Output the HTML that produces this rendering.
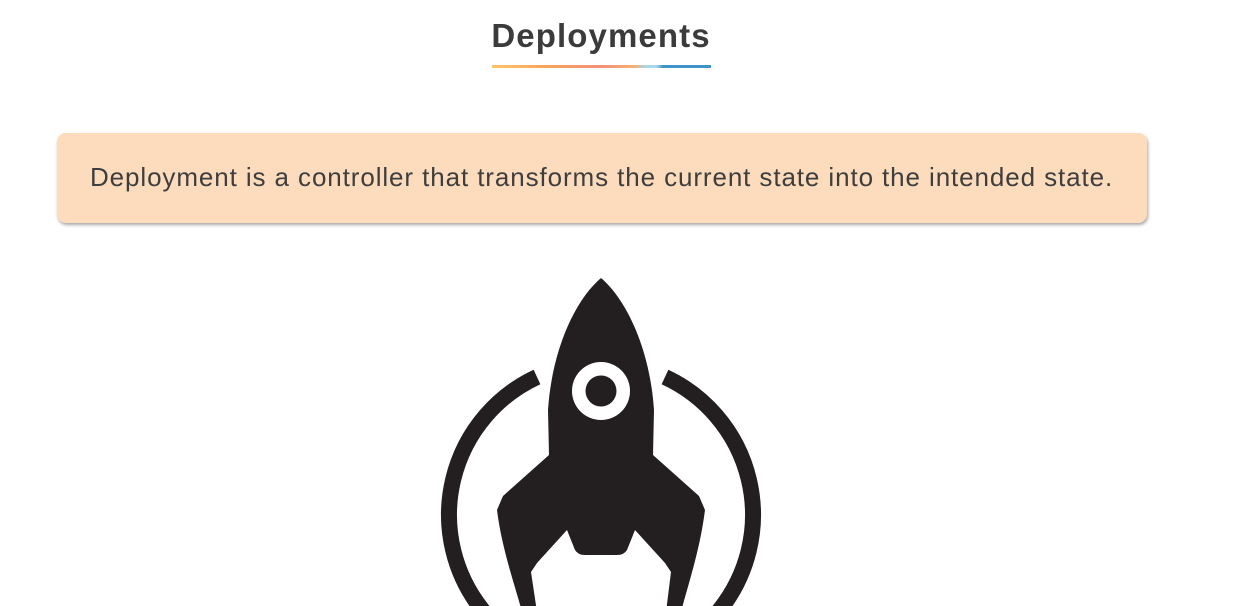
<!DOCTYPE html>
<html><head><style>
html,body{margin:0;padding:0;background:#fff;width:1250px;height:606px;overflow:hidden;position:relative;font-family:"Liberation Sans",sans-serif}
h1{position:absolute;left:0;width:1202px;top:16px;margin:0;text-align:center;font-size:33px;font-weight:bold;color:#3b3b3b;letter-spacing:1.1px;line-height:40px}
.ul{position:absolute;left:492px;top:65px;width:219px;height:3px;background:linear-gradient(90deg,#fbc46a 0%,#f8a35a 25%,#f4907a 50%,#f8ae70 65%,#a7d8ea 70%,#a7d8ea 75%,#3f93c6 78%,#3f93c6 100%)}
.box{position:absolute;left:57px;top:133px;width:1090px;height:90px;background:#fcdcbc;border-radius:9px;box-shadow:1px 2px 3px rgba(0,0,0,0.35)}
.box p{margin:0;position:absolute;left:33px;top:28px;font-size:26px;color:#3e3e3e;white-space:nowrap;letter-spacing:0.9px;line-height:32px}
svg{position:absolute;left:0;top:0}
</style></head><body>
<h1>Deployments</h1>
<div class="ul"></div>
<div class="box"><p>Deployment is a controller that transforms the current state into the intended state.</p></div>
<svg width="1250" height="606" viewBox="0 0 1250 606">
<path d="M537 377 A152 152 0 1 0 665 377" fill="none" stroke="#231f20" stroke-width="16"/>
<path d="M601 278 C575 300 552 350 548 410 L549 455 L503 496 L497 510 C502 550 515 585 522 612 L537 612 L531 572 L537 563 L567 530 L575 550 Q578 555 585 555 L617 555 Q624 555 627 550 L635 530 L665 563 L671 572 L666 612 L681 612 C688 585 700 550 705 510 L699 496 L653 455 L654 410 C650 350 627 300 601 278 Z" fill="#231f20" stroke="#fff" stroke-width="5" stroke-linejoin="round"/>
<path d="M601 278 C575 300 552 350 548 410 L549 455 L503 496 L497 510 C502 550 515 585 522 612 L537 612 L531 572 L537 563 L567 530 L575 550 Q578 555 585 555 L617 555 Q624 555 627 550 L635 530 L665 563 L671 572 L666 612 L681 612 C688 585 700 550 705 510 L699 496 L653 455 L654 410 C650 350 627 300 601 278 Z" fill="#231f20"/>
<circle cx="601" cy="391" r="29" fill="#fff"/>
<circle cx="601" cy="391" r="15.5" fill="#231f20"/>
</svg>
</body></html>
